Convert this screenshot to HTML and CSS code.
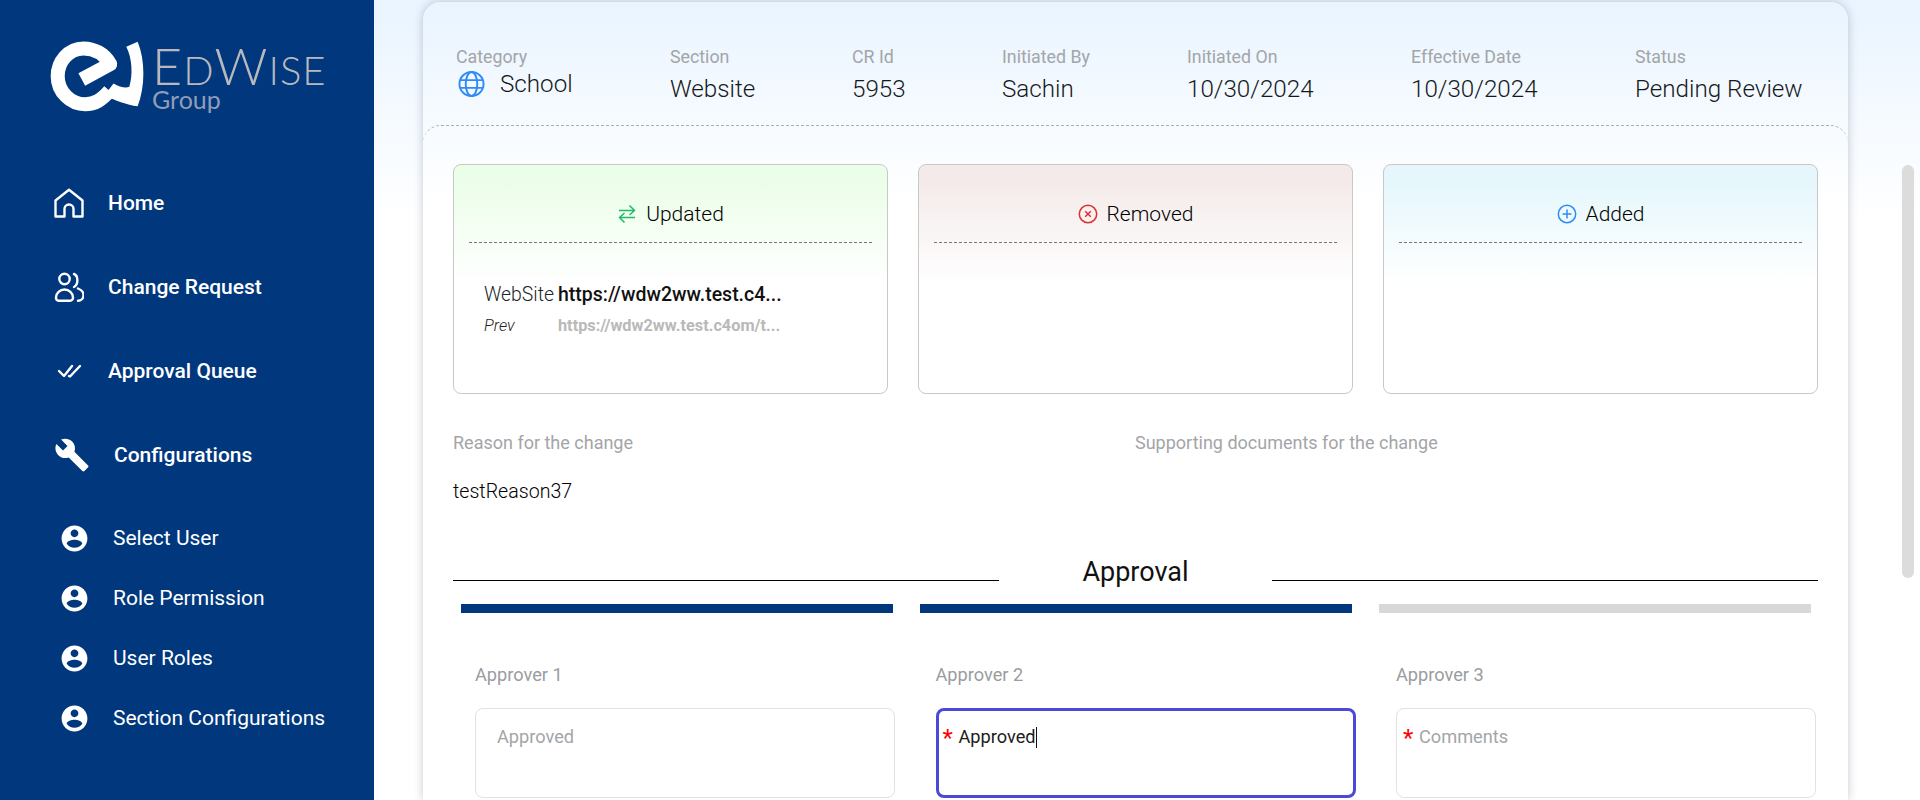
FILE: index.html
```html
<!DOCTYPE html>
<html lang="en">
<head>
  <meta charset="UTF-8">
  <title>Change Request</title>
  <link rel="stylesheet" href="styles.css">
</head>
<body>

  <aside class="sidebar">
    <div class="logo">
      <svg class="logo-mark" viewBox="60 60 290 215">
        <path d="M155 178 L240 132 C222 100 190 85 160 85 C115 85 83 125 83 168 C83 215 122 252 165 252 C195 252 215 238 238 212" fill="none" stroke="#fff" stroke-width="42" stroke-linejoin="round"/>
        <path d="M288 80 L322 65 C345 120 345 200 322 258 C290 255 255 240 222 226 L250 190 C268 200 285 205 297 200 C308 165 306 115 288 80 Z" fill="#fff"/>
      </svg>
      <div class="logo-text">
        <div class="logo-name">E<span>D</span>W<span>ISE</span></div>
        <div class="logo-group">Group</div>
      </div>
    </div>

    <nav>
      <a class="nav-item">
        <svg class="nav-icon" viewBox="0 0 30 30" fill="none" stroke="#fff" stroke-width="2.4" stroke-linejoin="round">
          <path d="M1.5 12.5 L15 1.8 L28.5 12.5 V28.5 H19.5 V21 A4.5 4.5 0 0 0 10.5 21 V28.5 H1.5 Z"/>
        </svg>
        Home
      </a>
      <a class="nav-item">
        <svg class="nav-icon" viewBox="0 0 30 30" fill="none" stroke="#fff" stroke-width="2.4" stroke-linecap="round">
          <circle cx="10.5" cy="7" r="5.2"/>
          <path d="M4 28.7 H16 A3 3 0 0 0 19 25.5 C19 21 15 17.5 10.5 17.5 C6 17.5 2 21 2 25.5 A3 3 0 0 0 4 28.7 Z"/>
          <path d="M20 2 C24.5 3.5 24.5 13 20 15"/>
          <path d="M24 16.5 C28 18 29.5 21 29.5 23 C29.5 26.5 27 28.7 24 28.7"/>
        </svg>
        Change Request
      </a>
      <a class="nav-item">
        <svg class="nav-icon" viewBox="0 0 30 30" fill="none" stroke="#fff" stroke-width="2.4" stroke-linecap="round" stroke-linejoin="round">
          <path d="M5 15 L10 20 L18 10"/>
          <path d="M15 20 L16 20.5 L26 10"/>
        </svg>
        Approval Queue
      </a>
      <a class="nav-item nav-item-config">
        <svg class="nav-icon-config" viewBox="0 0 24 24" fill="#fff">
          <path d="M22.7 19l-9.1-9.1c.9-2.3.4-5-1.5-6.9-2-2-5-2.4-7.4-1.3L9 6 6 9 1.6 4.7C.4 7.1.9 10.1 2.9 12.1c1.9 1.9 4.6 2.4 6.9 1.5l9.1 9.1c.4.4 1 .4 1.4 0l2.3-2.3c.5-.4.5-1.1.1-1.4z"/>
        </svg>
        Configurations
      </a>
      <div class="sub-list">
        <a class="sub-item">
          <svg class="sub-icon" viewBox="0 0 24 24" fill="#fff"><path d="M12 2C6.48 2 2 6.48 2 12s4.48 10 10 10 10-4.48 10-10S17.52 2 12 2zm0 3c1.66 0 3 1.34 3 3s-1.34 3-3 3-3-1.34-3-3 1.34-3 3-3zm0 14.2c-2.5 0-4.71-1.28-6-3.22.03-1.99 4-3.08 6-3.08 1.99 0 5.97 1.09 6 3.08-1.29 1.94-3.5 3.22-6 3.22z"/></svg>
          Select User
        </a>
        <a class="sub-item">
          <svg class="sub-icon" viewBox="0 0 24 24" fill="#fff"><path d="M12 2C6.48 2 2 6.48 2 12s4.48 10 10 10 10-4.48 10-10S17.52 2 12 2zm0 3c1.66 0 3 1.34 3 3s-1.34 3-3 3-3-1.34-3-3 1.34-3 3-3zm0 14.2c-2.5 0-4.71-1.28-6-3.22.03-1.99 4-3.08 6-3.08 1.99 0 5.97 1.09 6 3.08-1.29 1.94-3.5 3.22-6 3.22z"/></svg>
          Role Permission
        </a>
        <a class="sub-item">
          <svg class="sub-icon" viewBox="0 0 24 24" fill="#fff"><path d="M12 2C6.48 2 2 6.48 2 12s4.48 10 10 10 10-4.48 10-10S17.52 2 12 2zm0 3c1.66 0 3 1.34 3 3s-1.34 3-3 3-3-1.34-3-3 1.34-3 3-3zm0 14.2c-2.5 0-4.71-1.28-6-3.22.03-1.99 4-3.08 6-3.08 1.99 0 5.97 1.09 6 3.08-1.29 1.94-3.5 3.22-6 3.22z"/></svg>
          User Roles
        </a>
        <a class="sub-item">
          <svg class="sub-icon" viewBox="0 0 24 24" fill="#fff"><path d="M12 2C6.48 2 2 6.48 2 12s4.48 10 10 10 10-4.48 10-10S17.52 2 12 2zm0 3c1.66 0 3 1.34 3 3s-1.34 3-3 3-3-1.34-3-3 1.34-3 3-3zm0 14.2c-2.5 0-4.71-1.28-6-3.22.03-1.99 4-3.08 6-3.08 1.99 0 5.97 1.09 6 3.08-1.29 1.94-3.5 3.22-6 3.22z"/></svg>
          Section Configurations
        </a>
      </div>
    </nav>
  </aside>

  <main class="main">
    <div class="card">
      <div class="info-row">
        <div>
          <div class="info-label">Category</div>
          <div class="info-value info-category">
            <svg class="globe" viewBox="0 0 28 28" fill="none" stroke="#2f8cf5" stroke-width="2">
              <circle cx="14" cy="14" r="12.5"/>
              <ellipse cx="14" cy="14" rx="6" ry="12.5"/>
              <path d="M2.5 10 H25.5 M2.5 18 H25.5"/>
            </svg>
            School
          </div>
        </div>
        <div>
          <div class="info-label">Section</div>
          <div class="info-value">Website</div>
        </div>
        <div>
          <div class="info-label">CR Id</div>
          <div class="info-value">5953</div>
        </div>
        <div>
          <div class="info-label">Initiated By</div>
          <div class="info-value">Sachin</div>
        </div>
        <div>
          <div class="info-label">Initiated On</div>
          <div class="info-value">10/30/2024</div>
        </div>
        <div>
          <div class="info-label">Effective Date</div>
          <div class="info-value">10/30/2024</div>
        </div>
        <div>
          <div class="info-label">Status</div>
          <div class="info-value">Pending Review</div>
        </div>
      </div>

      <div class="panel">
        <div class="changes">
          <div class="change-card change-updated">
            <div class="change-head">
              <svg class="change-icon" viewBox="0 0 18 20" fill="none" stroke="#1fba6c" stroke-width="1.5">
                <path d="M1 6.5 H16.5 M11.5 1.5 L16.5 6.5 L11.5 11"/>
                <path d="M17 13.5 H1.5 M6.5 9 L1.5 13.5 L6.5 18.5"/>
              </svg>
              Updated
            </div>
            <div class="change-body">
              <div class="change-row">
                <span class="change-key">WebSite</span>
                <span class="change-new">https://wdw2ww.test.c4...</span>
              </div>
              <div class="change-row">
                <span class="change-prev-key">Prev</span>
                <span class="change-old">https://wdw2ww.test.c4om/t...</span>
              </div>
            </div>
          </div>
          <div class="change-card change-removed">
            <div class="change-head">
              <svg class="change-icon" viewBox="0 0 20 20" fill="none" stroke="#e02f2f" stroke-width="1.5">
                <circle cx="10" cy="10" r="8.7"/>
                <path d="M7.2 7.2 L12.8 12.8 M12.8 7.2 L7.2 12.8"/>
              </svg>
              Removed
            </div>
          </div>
          <div class="change-card change-added">
            <div class="change-head">
              <svg class="change-icon" viewBox="0 0 20 20" fill="none" stroke="#2f8cf5" stroke-width="1.5">
                <circle cx="10" cy="10" r="8.7"/>
                <path d="M10 5.5 V14.5 M5.5 10 H14.5"/>
              </svg>
              Added
            </div>
          </div>
        </div>

        <div class="reason">
          <div>
            <div class="reason-label">Reason for the change</div>
            <div class="reason-value">testReason37</div>
          </div>
          <div>
            <div class="reason-label">Supporting documents for the change</div>
          </div>
        </div>

        <div class="approval-title">
          <span class="approval-line"></span>
          <h2>Approval</h2>
          <span class="approval-line"></span>
        </div>

        <div class="steps">
          <div class="step step-done"></div>
          <div class="step step-done"></div>
          <div class="step"></div>
        </div>

        <div class="approvers">
          <div>
            <div class="approver-label">Approver 1</div>
            <div class="approver-box box-readonly">Approved</div>
          </div>
          <div>
            <div class="approver-label">Approver 2</div>
            <div class="approver-box box-focus"><span class="req">*</span>Approved<span class="caret"></span></div>
          </div>
          <div>
            <div class="approver-label">Approver 3</div>
            <div class="approver-box box-empty"><span class="req">*</span>Comments</div>
          </div>
        </div>
      </div>
    </div>
  </main>

  <div class="scrollbar"></div>

</body>
</html>
```

FILE: styles.css
```css
* {
  box-sizing: border-box;
}
html {
  overflow: hidden;
}
body {
  margin: 0;
  height: 800px;
  overflow: hidden;
  display: flex;
  font-family: Roboto, sans-serif;
  color: #212529;
  background: linear-gradient(to bottom, #e9f4ff 0, #ffffff 220px);
}

/* sidebar */
.sidebar {
  width: 374px;
  flex-shrink: 0;
  background: #00377d;
  color: #fff;
}
.logo {
  height: 161px;
  padding: 40px 0 0 50px;
  display: flex;
  align-items: flex-start;
}
.logo-mark {
  width: 97px;
  height: 72px;
}
.logo-text {
  margin-left: 5px;
  color: #b9b9bd;
  font-family: Lato, sans-serif;
  font-weight: 300;
}
.logo-name {
  font-size: 52px;
  line-height: 48px;
  margin-top: 1px;
  letter-spacing: 1px;
}
.logo-name span {
  font-size: 40px;
  line-height: 1;
}
.logo-group {
  font-size: 25px;
  line-height: 18px;
  font-weight: 400;
  color: #8f9db8;
}
.nav-item {
  height: 84px;
  padding-left: 54px;
  display: flex;
  align-items: center;
  gap: 24px;
  font-size: 21px;
  font-weight: 500;
}
.nav-icon {
  width: 30px;
  height: 30px;
}
.nav-icon-config {
  width: 36px;
  height: 36px;
}
.sub-list {
  padding-top: 11px;
}
.sub-item {
  height: 60px;
  padding-left: 59px;
  display: flex;
  align-items: center;
  gap: 23px;
  font-size: 21px;
}
.sub-icon {
  width: 31px;
  height: 31px;
}

/* main card */
.main {
  flex: 1;
  height: 800px;
  overflow: hidden;
  padding: 2px 0 0 49px;
}
.card {
  width: 1425px;
  height: 798px;
  border-radius: 18px 18px 0 0;
  background: linear-gradient(to bottom, #e9f4ff 0, #ffffff 200px);
  box-shadow: 0 0 10px rgba(40, 60, 90, 0.28);
}
.info-row {
  height: 123px;
  padding: 45px 0 0 33px;
  display: grid;
  grid-template-columns: 214px 182px 150px 185px 224px 224px auto;
}
.info-label {
  font-size: 17.8px;
  line-height: 20px;
  color: #a3a5a8;
}
.info-value {
  font-size: 24.2px;
  line-height: 26px;
  margin-top: 9px;
  font-weight: 300;
  color: #16191c;
}
.info-category {
  display: flex;
  align-items: center;
  gap: 15px;
  margin-top: 3px;
}
.globe {
  width: 27px;
  height: 28px;
  margin-left: 2px;
}
.panel {
  border-top: 1px dashed #aaaeb4;
  border-radius: 18px 18px 0 0;
  padding: 38px 30px 0;
}

/* updated, removed, added */
.changes {
  display: grid;
  grid-template-columns: repeat(3, 1fr);
  gap: 30px;
}
.change-card {
  height: 230px;
  border: 1px solid #c8c8c8;
  border-radius: 8px;
  background: #fff;
}
.change-updated {
  background: linear-gradient(to bottom, #ebfee8 0, #ebfee8 15px, #ffffff 119px);
}
.change-removed {
  background: linear-gradient(to bottom, #f5eaea 0, #f5eaea 15px, #ffffff 119px);
}
.change-added {
  background: linear-gradient(to bottom, #e5f7fc 0, #e5f7fc 15px, #ffffff 119px);
}
.change-head {
  height: 78px;
  margin: 0 15px;
  padding-top: 20px;
  display: flex;
  align-items: center;
  justify-content: center;
  gap: 9px;
  font-size: 21px;
  font-weight: 300;
  color: #000;
  border-bottom: 1px dashed #777;
}
.change-icon {
  width: 20px;
  height: 20px;
}
.change-body {
  padding: 36px 0 0 30px;
}
.change-row {
  display: flex;
  height: 31px;
  align-items: center;
}
.change-key {
  width: 74px;
  font-size: 19.4px;
  font-weight: 300;
}
.change-new {
  font-size: 19.5px;
  font-weight: 500;
  color: #111;
}
.change-prev-key {
  width: 74px;
  font-size: 16.3px;
  font-weight: 300;
  font-style: italic;
  color: #222;
}
.change-old {
  font-size: 16.3px;
  font-weight: 700;
  color: #b9b9b9;
}

/* reason */
.reason {
  margin-top: 38px;
  display: grid;
  grid-template-columns: 682px 1fr;
}
.reason-label {
  font-size: 18px;
  line-height: 22px;
  color: #a3a5a8;
}
.reason-value {
  font-size: 19.6px;
  line-height: 22px;
  margin-top: 27px;
  font-weight: 300;
  color: #000;
}

/* approval */
.approval-title {
  margin-top: 53px;
  display: flex;
  align-items: flex-end;
}
.approval-title h2 {
  width: 273px;
  margin: 0;
  text-align: center;
  font-size: 27px;
  line-height: 32px;
  font-weight: 400;
  color: #111;
}
.approval-line {
  flex: 1;
  height: 1px;
  margin-bottom: 7px;
  background: #000;
}
.steps {
  margin-top: 16px;
  padding: 0 7px 0 8px;
  display: grid;
  grid-template-columns: repeat(3, 1fr);
  gap: 27px;
}
.step {
  height: 9px;
  background: #d8d8d8;
}
.step-done {
  background: #00377d;
}
.approvers {
  margin-top: 51px;
  padding: 0 2px 0 22px;
  display: grid;
  grid-template-columns: repeat(3, 1fr);
  gap: 40.5px;
}
.approver-label {
  font-size: 18.2px;
  line-height: 22px;
  color: #9a9c9f;
}
.approver-box {
  margin-top: 22px;
  height: 90px;
  border: 1px solid #e2e2e2;
  border-radius: 8px;
  background: #fff;
  font-size: 18.2px;
  line-height: 22px;
  padding-top: 17px;
}
.box-readonly {
  padding-left: 21px;
  color: #a3a5a8;
}
.box-focus {
  padding-left: 4px;
  border: 3px solid #4a4ad6;
  padding-top: 15px;
  color: #1c1c1c;
}
.box-empty {
  padding-left: 6px;
  color: #a3a5a8;
}
.req {
  display: inline-block;
  width: 16px;
  color: #f00;
  font-size: 24px;
  line-height: 16px;
  vertical-align: -3px;
}
.caret {
  display: inline-block;
  width: 1px;
  height: 21px;
  background: #111;
  vertical-align: -5px;
}

.scrollbar {
  position: absolute;
  left: 1902px;
  top: 165px;
  width: 12px;
  height: 413px;
  border-radius: 6px;
  background: #dcdcdd;
}
```
